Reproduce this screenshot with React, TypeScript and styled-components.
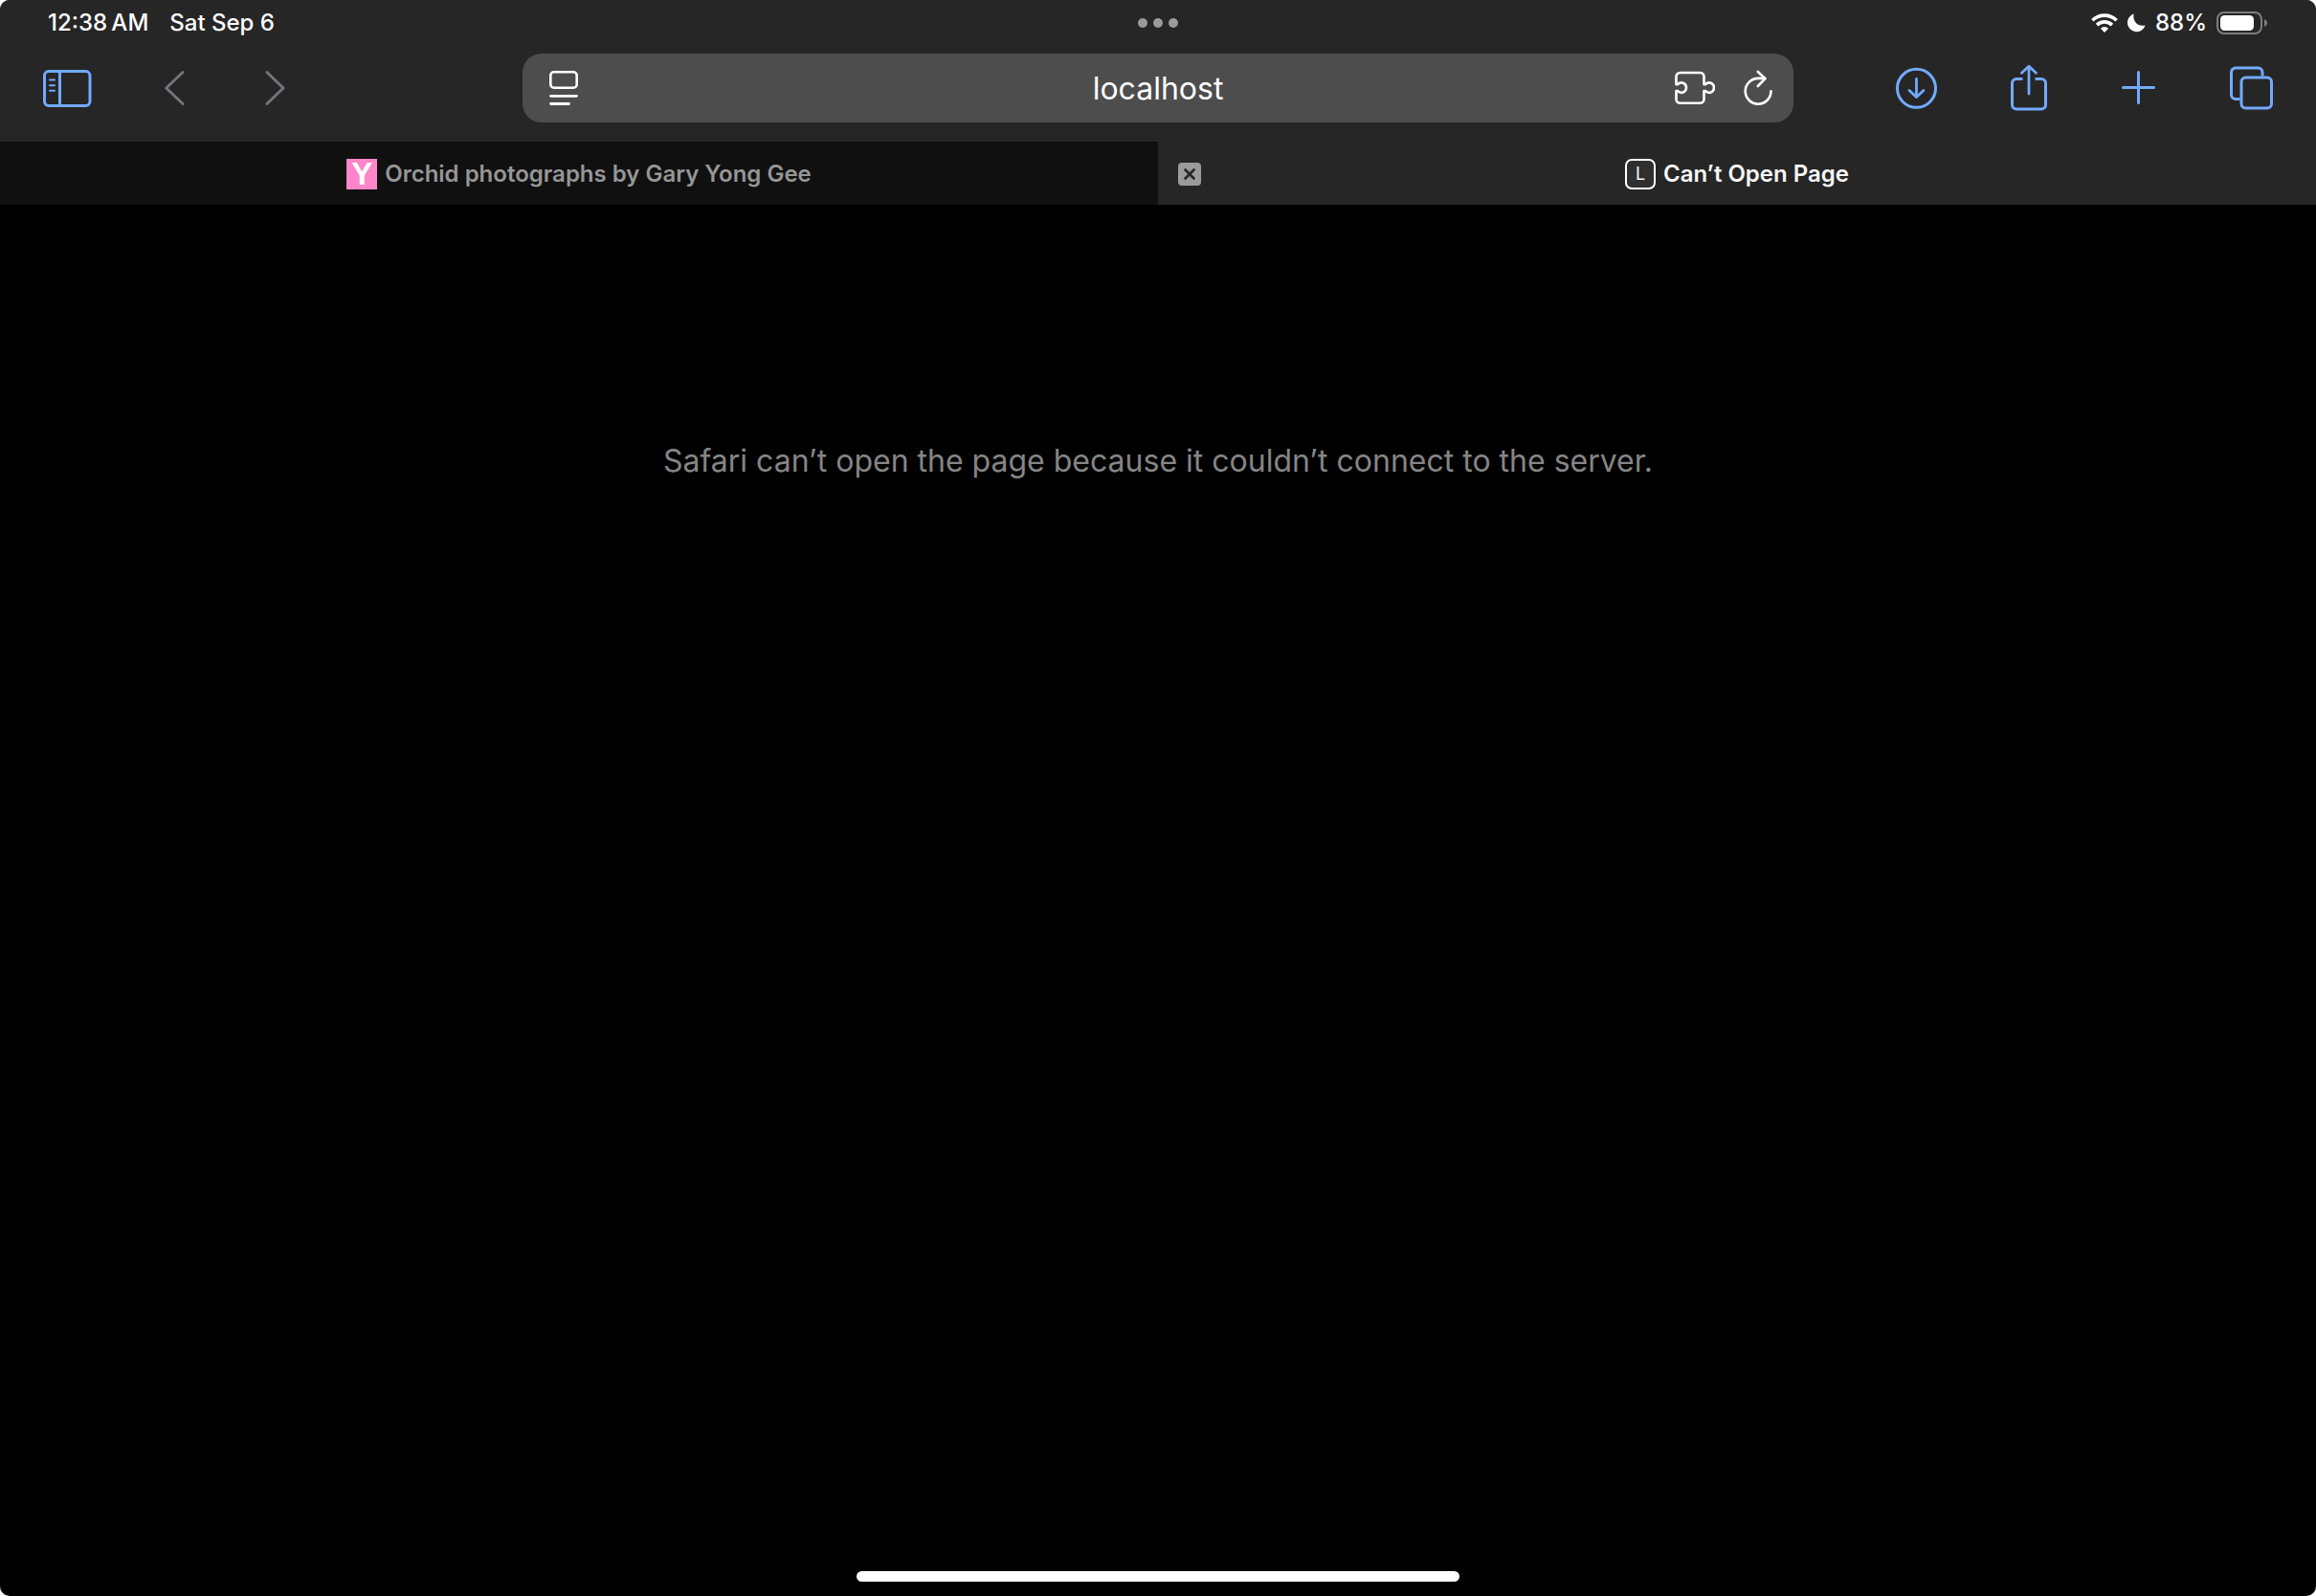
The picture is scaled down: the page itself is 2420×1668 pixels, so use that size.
import React from "react";
import styled, { createGlobalStyle } from "styled-components";

const color = {
  chrome: "#262626",
  field: "#4d4d4d",
  idleTab: "#101010",
  accent: "#72aaff",
  disabled: "#747479",
  muted: "#9b9b9b",
  message: "#858585",
};

const GlobalStyle = createGlobalStyle`
  *, *::before, *::after { box-sizing: border-box; }
  body { margin: 0; background: #fff; }
  button, input { font: inherit; color: inherit; }
  svg { display: block; }
`;

const Screen = styled.div`
  display: flex;
  flex-direction: column;
  min-height: 100vh;
  overflow: hidden;
  border-radius: 10px;
  background: #000;
  color: #fff;
  font-family: Inter, "Liberation Sans", sans-serif;
`;

const Chrome = styled.header`
  background: ${color.chrome};
`;

const StatusBar = styled.div`
  display: grid;
  grid-template-columns: 1fr auto 1fr;
  align-items: center;
  height: 48px;
  padding: 0 50px;
  font-size: 24px;
  font-weight: 500;
  line-height: 32px;
  white-space: nowrap;
`;

const StatusGroup = styled.div<{ $end?: boolean; $gap: number }>`
  display: flex;
  align-items: center;
  justify-content: ${(p) => (p.$end ? "flex-end" : "flex-start")};
  gap: ${(p) => p.$gap}px;
`;

const Dots = styled.button`
  display: flex;
  gap: 6px;
  padding: 0;
  border: 0;
  background: none;
`;

const Dot = styled.span`
  width: 10px;
  height: 10px;
  border-radius: 50%;
  background: ${color.muted};
`;

const Toolbar = styled.nav`
  display: grid;
  grid-template-columns: 1fr minmax(0, 1328px) 1fr;
  align-items: center;
  padding: 8px 44px 20px;
`;

const ToolGroup = styled.div<{ $end?: boolean }>`
  display: flex;
  align-items: center;
  justify-content: ${(p) => (p.$end ? "flex-end" : "flex-start")};
  gap: 76px;
`;

const IconButton = styled.button<{ $tone?: string }>`
  flex: none;
  padding: 0;
  border: 0;
  background: none;
  color: ${(p) => p.$tone ?? "#fff"};
`;

const AddressBar = styled.div`
  display: grid;
  grid-template-columns: 1fr 2fr 1fr;
  align-items: center;
  height: 72px;
  padding: 0 22px 0 28px;
  border-radius: 20px;
  background: ${color.field};
`;

const AddressInput = styled.input`
  width: 100%;
  padding: 2px 6px 0 0;
  border: 0;
  outline: 0;
  background: none;
  font-size: 32px;
  line-height: 40px;
  text-align: center;
`;

const AddressActions = styled.div`
  display: flex;
  align-items: center;
  justify-content: flex-end;
  gap: 30px;
`;

const TabStrip = styled.div`
  display: grid;
  grid-template-columns: 1fr 1fr;
`;

const Tab = styled.div<{ $active?: boolean }>`
  display: grid;
  grid-template-columns: 24px 1fr 24px;
  align-items: center;
  height: 66px;
  padding: 2px 21px 0;
  background: ${(p) => (p.$active ? color.chrome : color.idleTab)};
  color: ${(p) => (p.$active ? "#f7f7f7" : "#969696")};
`;

const TabLabel = styled.button`
  grid-column: 2;
  display: flex;
  align-items: center;
  justify-content: center;
  gap: 8px;
  padding: 0;
  border: 0;
  background: none;
  font-size: 24px;
  font-weight: 600;
  line-height: 32px;
  white-space: nowrap;
`;

const PinkIcon = styled.span`
  width: 32px;
  height: 32px;
  background: #ff85c8;
  color: #fff;
  font: 700 33px/32px "Liberation Sans", sans-serif;
  text-align: center;
`;

const LetterIcon = styled.span`
  width: 32px;
  height: 32px;
  border: 2px solid #fff;
  border-radius: 7px;
  background: #2f2f2f;
  font-size: 18px;
  font-weight: 400;
  line-height: 28px;
  text-align: center;
`;

const Page = styled.main`
  flex: 1;
  padding: 248px 40px 0;
`;

const Message = styled.p`
  margin: 0;
  color: ${color.message};
  font-size: 32px;
  line-height: 40px;
  text-align: center;
`;

const HomeArea = styled.footer`
  display: flex;
  justify-content: center;
  padding-bottom: 15px;
`;

const HomeIndicator = styled.div`
  width: 630px;
  max-width: 60%;
  height: 11px;
  border-radius: 6px;
  background: #fff;
`;

type IconProps = { w: number; h: number; stroke?: number; children: React.ReactNode };

const Icon = ({ w, h, stroke = 3, children }: IconProps) => (
  <svg
    width={w}
    height={h}
    viewBox={`0 0 ${w} ${h}`}
    fill="none"
    stroke="currentColor"
    strokeWidth={stroke}
    strokeLinecap="round"
    strokeLinejoin="round"
    aria-hidden="true"
  >
    {children}
  </svg>
);

const Wifi = () => (
  <svg width="28" height="20" viewBox="0 0 28 20" fill="none" stroke="#fff" strokeWidth="3.6" aria-hidden="true">
    <path d="M1.4 7.3a18 18 0 0 1 25.2 0" />
    <path d="M6.1 12.1a11.3 11.3 0 0 1 15.8 0" />
    <path d="M14 19.9l-4.1-4.1a5.8 5.8 0 0 1 8.2 0z" fill="#fff" stroke="none" />
  </svg>
);

const Moon = () => (
  <svg width="19" height="20" viewBox="0 0 19 20" aria-hidden="true">
    <path d="M6.6.4C5.2 6.8 9.5 14.2 18.6 12.5 17 16.5 13.7 19.2 9.7 19.2 4.4 19.2 0 15 0 9.6 0 5.4 2.7 1.8 6.6.4z" fill="#fff" />
  </svg>
);

const Battery = () => (
  <svg width="54" height="24" viewBox="0 0 54 24" aria-hidden="true">
    <rect x="1" y="1" width="46" height="22" rx="7" fill="none" stroke="#7d7d7d" strokeWidth="2" />
    <rect x="4" y="4" width="35" height="16" rx="4.5" fill="#fff" />
    <path d="M50 8.2c2 .6 3 2 3 3.800s-1 3.200-3 3.800z" fill="#7d7d7d" />
  </svg>
);

export default function App() {
  return (
    <>
      <GlobalStyle />
      <Screen>
        <Chrome>
          <StatusBar>
            <StatusGroup $gap={22}>
              <span>12:38{"\u2009"}AM</span>
              <span>Sat Sep 6</span>
            </StatusGroup>
            <Dots aria-label="Multitasking">
              <Dot />
              <Dot />
              <Dot />
            </Dots>
            <StatusGroup $end $gap={10}>
              <Wifi />
              <Moon />
              <span>88%</span>
              <Battery />
            </StatusGroup>
          </StatusBar>

          <Toolbar>
            <ToolGroup>
              <IconButton $tone={color.accent} aria-label="Sidebar">
                <Icon w={52} h={40}>
                  <rect x="2.5" y="2.5" width="47.5" height="36" rx="4.5" />
                  <path d="M18.5 2.5v36" />
                  <path d="M8 11.5h5M8 17.2h5M8 22.8h5" strokeWidth="2" />
                </Icon>
              </IconButton>
              <IconButton $tone={color.disabled} aria-label="Back">
                <Icon w={29} h={40}>
                  <path d="M19 3.5 1.7 20 19 36.5" />
                </Icon>
              </IconButton>
              <IconButton $tone={color.disabled} aria-label="Forward">
                <Icon w={29} h={40}>
                  <path d="M2 3.5 19 20 2 36.5" />
                </Icon>
              </IconButton>
            </ToolGroup>

            <AddressBar>
              <IconButton aria-label="Page menu">
                <Icon w={30} h={36}>
                  <rect x="1.3" y="1.3" width="27.4" height="16.4" rx="3.5" strokeWidth="2.6" />
                  <path d="M1.5 26.3h27M1.5 34.5h19" strokeWidth="2.8" />
                </Icon>
              </IconButton>
              <AddressInput aria-label="Address" defaultValue="localhost" />
              <AddressActions>
                <IconButton aria-label="Extensions">
                  <Icon w={42} h={36} stroke={2.6}>
                    <path d="M1.5 14.2V6a4 4 0 0 1 4-4h21a4 4 0 0 1 4 4v8.200h1.200c.8 0 1.100-.6 1.700-1.200a5.200 5.200 0 1 1 0 9.200c-.6-.6-.9-1.200-1.700-1.200h-1.200v8.800a4 4 0 0 1-4 4h-21a4 4 0 0 1-4-4V21h1.200c.8 0 1.100.6 1.700 1.200a5.200 5.200 0 1 0 0-9.200c-.6.6-.9 1.200-1.700 1.200H1.5" />
                  </Icon>
                </IconButton>
                <IconButton aria-label="Reload">
                  <Icon w={30} h={38} stroke={2.6}>
                    <path d="M28.5 22.3a13.4 13.4 0 1 1-13.4-13.4h7" />
                    <path d="M14.8 2 22.5 9.2 14.8 17" />
                  </Icon>
                </IconButton>
              </AddressActions>
            </AddressBar>

            <ToolGroup $end>
              <IconButton $tone={color.accent} aria-label="Downloads">
                <Icon w={44} h={44}>
                  <circle cx="22.5" cy="22.3" r="20" />
                  <path d="M22.5 12.5v19M15 24.500l7.500 7 7.500-7" strokeWidth="2.8" />
                </Icon>
              </IconButton>
              <IconButton $tone={color.accent} aria-label="Share">
                <Icon w={40} h={50}>
                  <path d="M13.5 15.5H7A4.5 4.5 0 0 0 2.5 20v22.5A4.5 4.5 0 0 0 7 47h26a4.5 4.5 0 0 0 4.500-4.500V20a4.500 4.500 0 0 0-4.500-4.500h-6.500" strokeLinecap="butt" />
                  <path d="M20 31V2.5M12.5 9.3 20 2.300l7.500 7" strokeWidth="2.8" />
                </Icon>
              </IconButton>
              <IconButton $tone={color.accent} aria-label="New tab">
                <Icon w={38} h={38}>
                  <path d="M18.5 2.5v32M2.5 18.5h32" />
                </Icon>
              </IconButton>
              <IconButton $tone={color.accent} aria-label="Tab overview">
                <Icon w={46} h={46}>
                  <path d="M10.5 34.5H6a4.500 4.500 0 0 1-4.500-4.500V6.500A4.500 4.500 0 0 1 6 2h23.500A4.500 4.500 0 0 1 34 6.500v4" strokeLinecap="butt" />
                  <rect x="12" y="12" width="31.5" height="32" rx="4.5" />
                </Icon>
              </IconButton>
            </ToolGroup>
          </Toolbar>
        </Chrome>

        <TabStrip>
          <Tab>
            <TabLabel>
              <PinkIcon aria-hidden="true">Y</PinkIcon>
              <span>Orchid photographs by Gary Yong Gee</span>
            </TabLabel>
          </Tab>
          <Tab $active>
            <IconButton aria-label="Close tab">
              <svg width="24" height="24" viewBox="0 0 24 24" aria-hidden="true">
                <rect width="24" height="24" rx="4" fill={color.muted} />
                <path d="M7.5 7.500l9 9M16.500 7.500l-9 9" stroke={color.chrome} strokeWidth="2.6" strokeLinecap="round" />
              </svg>
            </IconButton>
            <TabLabel>
              <LetterIcon aria-hidden="true">L</LetterIcon>
              <span>Can’t Open Page</span>
            </TabLabel>
          </Tab>
        </TabStrip>

        <Page>
          <Message>Safari can’t open the page because it couldn’t connect to the server.</Message>
        </Page>

        <HomeArea>
          <HomeIndicator />
        </HomeArea>
      </Screen>
    </>
  );
}
